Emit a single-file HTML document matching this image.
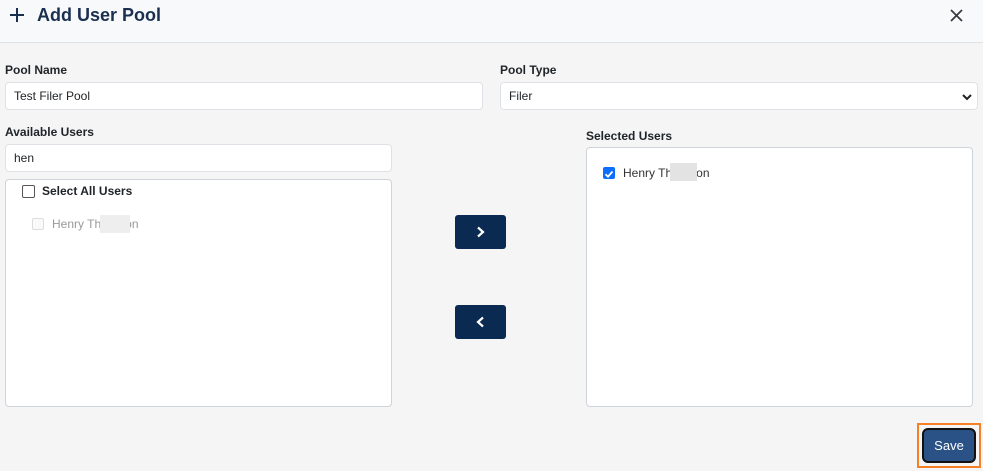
<!DOCTYPE html>
<html><head><meta charset="utf-8"><style>
*{box-sizing:border-box;margin:0;padding:0}
body{width:983px;height:471px;background:#f5f5f5;font-family:"Liberation Sans",sans-serif;position:relative;overflow:hidden;color:#212529}
.hdr{position:absolute;left:0;top:0;width:983px;height:43px;background:#f8f9fb;border-bottom:1px solid #dee2e6}
.ttl{position:absolute;left:37px;top:5px;font-size:18px;font-weight:bold;color:#1b2f4f}
.lbl{position:absolute;font-size:12px;font-weight:bold;color:#212529}
.inp{position:absolute;background:#fff;border:1px solid #dee2e6;border-radius:4px;font-size:12px;padding-left:8px;line-height:26px;color:#212529}
.box{position:absolute;background:#fff;border:1px solid #ced4da;border-radius:4px}
.cb{position:absolute;width:12px;height:12px;border:1px solid #555;border-radius:2px;background:#fff}
.btn{position:absolute;left:455px;width:51px;height:34px;background:#0b2a52;border-radius:3px}
.blur{position:absolute;background:#e3e3e3}
</style></head><body>
<div class="hdr">
<svg style="position:absolute;left:9px;top:7px" width="16" height="16"><path d="M8 1V15M1 8H15" stroke="#1b2f4f" stroke-width="2"/></svg>
<div class="ttl">Add User Pool</div>
<svg style="position:absolute;left:950px;top:9px" width="13" height="13"><path d="M1 1L12 12M12 1L1 12" stroke="#343a40" stroke-width="1.7"/></svg>
</div>
<div class="lbl" style="left:5px;top:63px">Pool Name</div>
<div class="inp" style="left:5px;top:82px;width:478px;height:28px">Test Filer Pool</div>
<div class="lbl" style="left:500px;top:63px">Pool Type</div>
<div class="inp" style="left:500px;top:82px;width:478px;height:28px">Filer
<svg style="position:absolute;right:5px;top:10px" width="10" height="8"><path d="M1 2L5 6L9 2" stroke="#222" stroke-width="2" fill="none"/></svg></div>
<div class="lbl" style="left:5px;top:125px">Available Users</div>
<div class="inp" style="left:5px;top:144px;width:387px;height:28px">hen</div>
<div class="box" style="left:5px;top:179px;width:387px;height:228px"></div>
<div class="cb" style="left:22px;top:185px;width:13px;height:13px"></div>
<div class="lbl" style="left:42px;top:184px">Select All Users</div>
<div class="cb" style="left:32px;top:218px;border-color:#ddd;background:#fafafa"></div>
<div style="position:absolute;left:52px;top:217px;font-size:12px;color:#999">Henry Th<span style="display:inline-block;width:24px"></span>on</div>
<div class="blur" style="left:100px;top:215px;width:30px;height:18px;background:#eee"></div>
<div class="lbl" style="left:586px;top:129px">Selected Users</div>
<div class="box" style="left:586px;top:147px;width:387px;height:260px"></div>
<div style="position:absolute;left:603px;top:167px;width:12px;height:12px;background:#0d6efd;border-radius:2px"><svg width="12" height="12"><path d="M2.5 6.2L5 8.7L9.5 3.5" stroke="#fff" stroke-width="1.8" fill="none"/></svg></div>
<div style="position:absolute;left:623px;top:166px;font-size:12px;color:#333">Henry Th<span style="display:inline-block;width:24px"></span>on</div>
<div class="blur" style="left:670px;top:163px;width:27px;height:18px"></div>
<div class="btn" style="top:215px"><svg style="position:absolute;left:21px;top:11px" width="10" height="12"><path d="M2 1.5L7 6L2 10.5" stroke="#fff" stroke-width="2.2" fill="none"/></svg></div>
<div class="btn" style="top:305px"><svg style="position:absolute;left:20px;top:11px" width="10" height="12"><path d="M8 1.5L3 6L8 10.5" stroke="#fff" stroke-width="2.2" fill="none"/></svg></div>
<div style="position:absolute;left:917px;top:423px;width:64px;height:45px;border:2px solid #f58025"></div>
<div style="position:absolute;left:922px;top:428px;width:54px;height:35px;background:#2b5287;border:2px solid #111;border-radius:6px;color:#fff;font-size:13px;text-align:center;line-height:31px">Save</div>
</body></html>
